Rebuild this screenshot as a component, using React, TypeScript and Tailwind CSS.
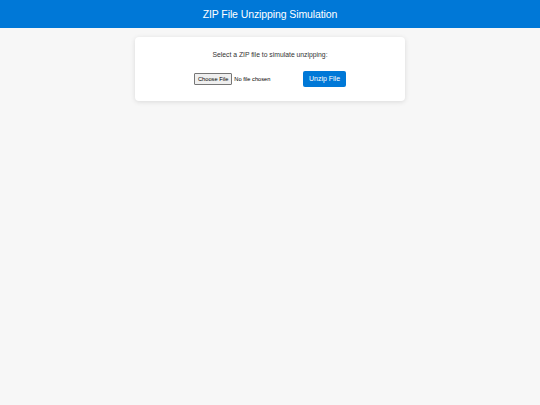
export default function App() {
  return (
    <div className="min-h-[405px] bg-[#f7f7f7] font-['Liberation_Sans',Arial,sans-serif]">
      <header className="h-[28px] bg-[#0078d7] flex items-center justify-center">
        <h1 className="text-white text-[10.5px] tracking-[-0.1px] leading-none">ZIP File Unzipping Simulation</h1>
      </header>
      <div className="w-[270px] mx-auto mt-[9px] bg-white rounded-[4px] shadow-[0_1px_5px_rgba(0,0,0,0.12)] pt-[15px] pb-[14px] flex flex-col items-center">
        <p className="text-[6.8px] text-[#333] leading-none">Select a ZIP file to simulate unzipping:</p>
        <div className="mt-[12px] flex items-center">
          <input
            type="file"
            accept=".zip"
            className="w-[104px] text-[5.7px] text-black file:text-[5.7px] file:px-[3px] file:py-[0.5px] file:mr-[2px] file:border file:border-[#767676] file:rounded-[1px] file:bg-[#efefef]"
          />
          <button className="ml-[5px] bg-[#0078d7] text-white text-[7px] rounded-[2px] w-[43px] h-[16px]">
            Unzip File
          </button>
        </div>
      </div>
    </div>
  )
}
